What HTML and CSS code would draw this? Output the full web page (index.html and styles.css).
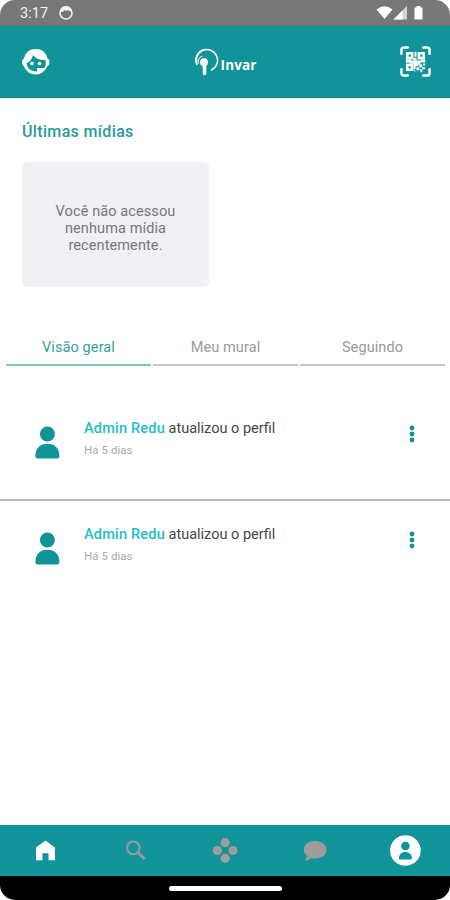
FILE: index.html
```
<!DOCTYPE html>
<html lang="pt-BR">
<head>
<meta charset="utf-8">
<title>Invar</title>
<link rel="stylesheet" href="styles.css">
</head>
<body>
<div class="phone">
  <div class="status">
    <span class="clock">3:17</span>
    <svg class="face" width="16" height="16" viewBox="0 0 16 16"><circle cx="8" cy="8" r="6" fill="none" stroke="#f0f0f0" stroke-width="1.600"/><path d="M2 7C2 3 5 1 8 1s6 2 6 6l-3-1-1-1-2 1-2-1-1 2z" fill="#f0f0f0"/></svg>
    <svg class="signals" width="50" height="16" viewBox="0 0 50 16"><path d="M0.500 4.500Q8.500-2 16.500 4.500L8.500 14z" fill="#fff"/><path d="M17.500 14.500L31 1v13.500z" fill="#d2d2d2"/><path d="M17.500 14.500L26.500 5.500v9z" fill="#fff"/><path d="M38.500 2.500h2V1h4v1.500h2V14.500h-8z" fill="#fff"/></svg>
  </div>
  <header class="header">
    <svg width="30" height="28" viewBox="0 0 30 28"><path d="M1 14C1 12 2 11 3 10.500C4.500 4 9 1 14.700 1S25 4 26.500 10.500c1 .5 2 1.500 2 3.500s-1 4-2.500 4.500C24 23 20 26.500 15 26.500C9 26.500 5 23 3 18.500C2 18 1 16 1 14z" fill="#fff"/><path d="M5.500 15C9 14 11 11 12 7c2 3 6 5 12.500 5c.8 4 0 6.500-1 8H16v3.500C10 23.500 6 20 5.500 15z" fill="#109499"/><circle cx="11" cy="15.500" r="1.800" fill="#fff"/><circle cx="18.500" cy="15.500" r="1.800" fill="#fff"/></svg>
    <div class="brand">
      <svg width="26" height="30" viewBox="0 0 26 30" fill="none" stroke="#fff"><path d="M4 18A10.800 10.800 0 1 1 18 23.300" stroke-width="1.500"/><path d="M4 17A10.500 10.500 0 0 1 12.500 2.700" stroke-width="1.800"/><path d="M5.500 16.500A6 6 0 0 1 9.500 9" stroke-width="1"/><circle cx="11" cy="15.300" r="4" fill="#fff" stroke="none"/><path d="M11.500 17v9.500" stroke-width="3.600" stroke-linecap="round"/></svg>
      <span class="brand-name">Invar</span>
    </div>
    <svg width="31" height="31" viewBox="0 0 32 32" fill="none" stroke="#fff"><path d="M1.500 8V4q0-2.500 2.500-2.500h4M24 1.500h4q2.500 0 2.500 2.500v4M30.500 24v4q0 2.500-2.500 2.500h-4M8 30.500H4q-2.500 0-2.500-2.500v-4" stroke-width="2.600" stroke-linecap="round"/><path d="M7.500 7.500h5v5h-5zM19.500 7.500h5v5h-5zM7.500 19.500h5v5h-5z" stroke-width="2.700"/><path d="M15 6h2v5h-2zM14 12h3v3h5v-1h4v3h-5v2h-2v2h-3v3h-2v-6h-4v-1H6v-3h5v1h3zM17 22h3v3h-3zM20 19h3v3h-3zM23 22h3v2h-3zM21 24h2v3h-2zM24 18h2v2h-2zM14 25h2v1h-2z" fill="#fff" stroke="none"/></svg>
  </header>
  <main class="content">
    <h1 class="title">Últimas mídias</h1>
    <section class="empty"><span>Você não acessou</span><span>nenhuma mídia</span><span>recentemente.</span></section>
    <nav class="tabs">
      <div class="tab active">Visão geral</div>
      <div class="tab">Meu mural</div>
      <div class="tab">Seguindo</div>
    </nav>
    <article class="post first">
      <svg class="avatar" width="26" height="34" viewBox="0 0 26 34"><circle cx="13.400" cy="8" r="7.500"/><path d="M1.400 30C1.400 22 6 17.700 13.400 17.700S25.400 22 25.400 30Q25.400 32.500 23 32.500h-19Q1.400 32.500 1.400 30z"/></svg>
      <div class="text"><p class="line"><b>Admin Redu</b> atualizou o perfil</p><p class="time">Há 5 dias</p></div>
      <svg class="more" width="6" height="18" viewBox="0 0 6 18"><circle cx="3" cy="3" r="2.400"/><circle cx="3" cy="9" r="2.400"/><circle cx="3" cy="15" r="2.400"/></svg>
    </article>
    <article class="post">
      <svg class="avatar" width="26" height="34" viewBox="0 0 26 34"><circle cx="13.400" cy="8" r="7.500"/><path d="M1.400 30C1.400 22 6 17.700 13.400 17.700S25.400 22 25.400 30Q25.400 32.500 23 32.500h-19Q1.400 32.500 1.400 30z"/></svg>
      <div class="text"><p class="line"><b>Admin Redu</b> atualizou o perfil</p><p class="time">Há 5 dias</p></div>
      <svg class="more" width="6" height="18" viewBox="0 0 6 18"><circle cx="3" cy="3" r="2.400"/><circle cx="3" cy="9" r="2.400"/><circle cx="3" cy="15" r="2.400"/></svg>
    </article>
  </main>
  <nav class="bottom">
    <div><svg width="32" height="32" viewBox="0 0 32 32"><path d="M6 12.500L15.500 5.500L25 12.500V25.200H18.500v-7h-6v7H6z" fill="#fff"/></svg></div>
    <div><svg width="32" height="32" viewBox="0 0 32 32" fill="none" stroke="#999"><circle cx="13.300" cy="12.800" r="6.300" stroke-width="2.200"/><path d="M18 17.500l6.500 6.500" stroke-width="3"/></svg></div>
    <div><svg width="32" height="32" viewBox="0 0 32 32" fill="#a19c9c"><circle cx="16.200" cy="7.700" r="4.600"/><circle cx="8.400" cy="15.500" r="4.600"/><circle cx="24" cy="15.500" r="4.600"/><circle cx="16.200" cy="23.300" r="4.600"/></svg></div>
    <div><svg width="32" height="32" viewBox="0 0 32 32"><path d="M16.200 6C23 6 27.500 9.700 27.500 14.800S23 23.500 16.200 23.500c-1.500 0-3-.2-4-.6C10 25 7.500 25.500 5.500 25.300C7 24 8 22 8 20.800C6 19 4.800 17 4.800 14.800C4.800 9.700 9.500 6 16.200 6z" fill="#a19c9c"/></svg></div>
    <div><svg width="32" height="32" viewBox="0 0 32 32"><circle cx="16.400" cy="15.500" r="15.300" fill="#fff"/><circle cx="16.400" cy="11" r="4.300" fill="#109499"/><path d="M9.900 23.500c0-4 2.500-6.500 6.500-6.500s6.500 2.500 6.500 6.500q0 1-1 1h-11q-1 0-1-1z" fill="#109499"/></svg></div>
  </nav>
  <div class="gesture"><i></i></div>
</div>
</body>
</html>
```
FILE: styles.css
```
* { box-sizing: border-box; }
body { margin: 0; background: #fff; font-family: Roboto, sans-serif; }
svg { display: block; }
p, h1 { margin: 0; }
.phone { width: 450px; height: 900px; display: flex; flex-direction: column; border-radius: 15px; overflow: hidden; background: #fff; }
.status { height: 26px; flex: none; background: #777; display: flex; align-items: center; padding: 0 24px 0 20px; color: #f4f4f4; }
.clock { font-size: 14.5px; letter-spacing: .1px; }
.face { margin-left: 10px; }
.signals { margin-left: auto; }
.header { height: 72px; flex: none; background: #109499; border-bottom: 1px solid #0b858c; display: grid; grid-template-columns: 1fr auto 1fr; align-items: center; padding: 0 19px 0 21px; }
.header > :last-child { justify-self: end; }
.brand { display: flex; align-items: center; gap: 2px; margin-right: 3px; color: #fff; }
.brand-name { font-family: "Open Sans", sans-serif; font-weight: 700; font-size: 13.5px; letter-spacing: .1px; line-height: 18px; padding-top: 6px; }
.content { flex: 1; }
.title { height: 64px; padding: 24px 22px 0; font-size: 16px; line-height: 20px; font-weight: 500; letter-spacing: .35px; color: #279a9d; }
.empty { width: 187px; height: 125px; margin-left: 22px; border-radius: 6px; background: #f0f0f5; display: flex; flex-direction: column; align-items: center; justify-content: center; padding-top: 8px; font-size: 14.5px; line-height: 17px; letter-spacing: .1px; color: #77777b; }
.tabs { display: grid; grid-template-columns: repeat(3, 1fr); gap: 2px; margin: 50px 5px 0 6px; }
.tab { height: 29px; border-bottom: 2px solid #c6c6c6; text-align: center; font-size: 14.5px; line-height: 22px; letter-spacing: .1px; color: #999; }
.tab.active { color: #369f9c; border-color: #7fc4c0; }
.post { display: flex; align-items: flex-start; padding: 23px 35px 0 34px; }
.post.first { height: 135px; padding-top: 52px; border-bottom: 2px solid #b8b8b8; }
.avatar { margin-top: 8px; fill: #109499; }
.text { flex: 1; margin-left: 24px; }
.line { font-size: 14.5px; line-height: 22px; letter-spacing: 0; color: #464646; }
.line b { font-weight: 500; letter-spacing: .2px; color: #20bfc4; }
.time { margin-top: 2px; font-size: 11.5px; line-height: 16px; letter-spacing: .05px; color: #aaa; }
.more { margin-top: 7px; fill: #168f94; }
.bottom { height: 51px; flex: none; background: #109499; display: grid; grid-template-columns: repeat(5, 1fr); align-items: center; justify-items: center; padding-left: 1px; }
.gesture { height: 24px; flex: none; background: #000; display: flex; justify-content: center; align-items: center; }
.gesture i { width: 113px; height: 5px; border-radius: 3px; background: #fff; }
```
